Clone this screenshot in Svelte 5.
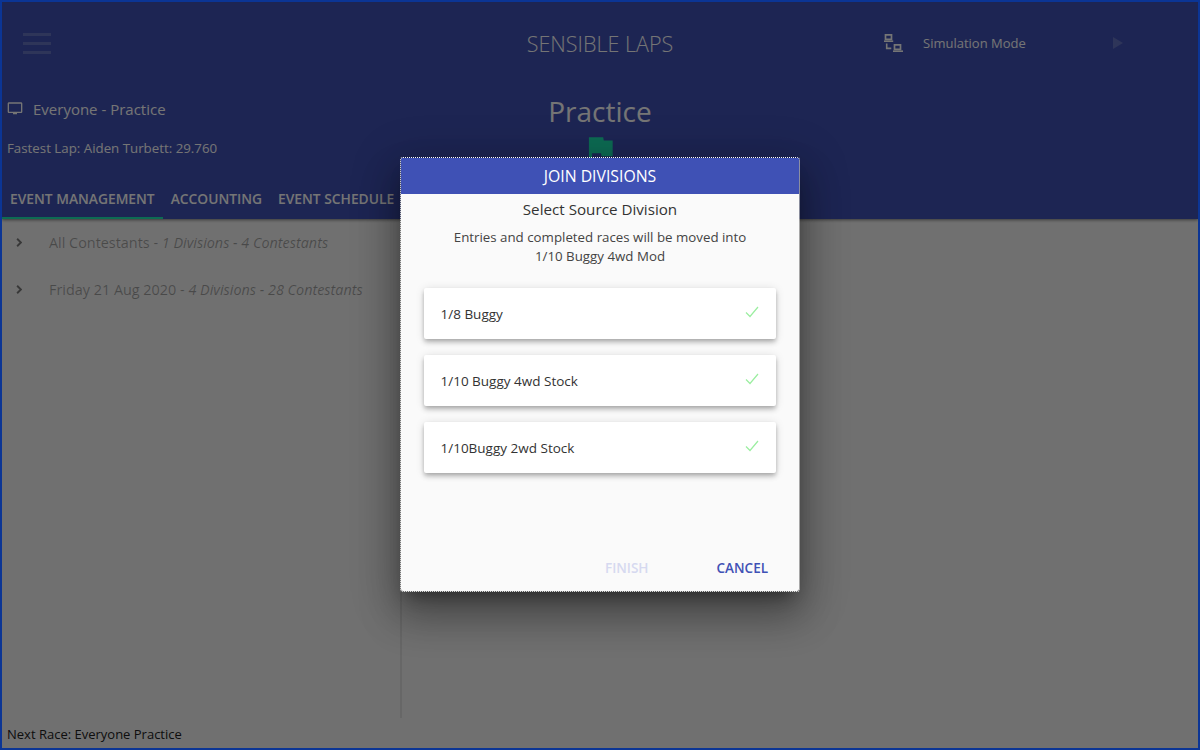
<script lang="ts">
const tabs = ['EVENT MANAGEMENT', 'ACCOUNTING', 'EVENT SCHEDULE'];
const groups = [
  { name: 'All Contestants', detail: '1 Divisions - 4 Contestants' },
  { name: 'Friday 21 Aug 2020', detail: '4 Divisions - 28 Contestants' },
];
const divisions = ['1/8 Buggy', '1/10 Buggy 4wd Stock', '1/10Buggy 2wd Stock'];
</script>

<div class="window">
  <header class="header">
    <div class="topbar">
      <div class="menu" aria-hidden="true"><i></i><i></i><i></i></div>
      <div class="brand">SENSIBLE LAPS</div>
      <div class="mode">
        <svg class="mode-icon" viewBox="0 0 20 20" width="20" height="20" aria-hidden="true">
          <path d="M2.5 1.8h6v4.6h-6z" fill="none" stroke="currentColor" stroke-width="1.7"/>
          <path d="M1 7.4h9.2v1.6H1z" fill="currentColor"/>
          <path d="M11.5 11.8h6v4.6h-6z" fill="none" stroke="currentColor" stroke-width="1.7"/>
          <path d="M10 17.4h10v1.6H10z" fill="currentColor"/>
          <path d="M3.7 10.4v5h4.6" fill="none" stroke="currentColor" stroke-width="1.6"/>
        </svg>
        <span class="mode-label">Simulation Mode</span>
        <svg class="play" viewBox="0 0 10 12" width="10" height="12" aria-hidden="true"><path d="M0 0l10 6-10 6z" fill="currentColor"/></svg>
      </div>
    </div>

    <div class="status">
      <div class="status-left">
        <div class="session">
          <svg viewBox="0 0 24 24" width="16" height="16" aria-hidden="true">
            <path fill="currentColor" d="M21 2H3c-1.1 0-2 .9-2 2v12c0 1.1.9 2 2 2h6v2h6v-2h6c1.1 0 2-.9 2-2V4c0-1.1-.9-2-2-2zm0 14H3V4h18v12z"/>
          </svg>
          <span>Everyone - Practice</span>
        </div>
        <div class="fastest">Fastest Lap: Aiden Turbett: 29.760</div>
      </div>
      <div class="status-mid">
        <div class="race-title">Practice</div>
        <svg class="flag" viewBox="0 0 24 24" width="38" height="38" aria-hidden="true">
          <path fill="#1de9b6" d="M14.4 6L14 4H5v17h2v-7h5.6l.4 2h7V6z"/>
        </svg>
      </div>
    </div>

    <nav class="tabs">
      {#each tabs as tab, i}
        <span class="tab" class:active={i === 0}>{tab}</span>
      {/each}
    </nav>
  </header>

  <main class="content">
    <section class="left">
      {#each groups as group}
        <div class="group">
          <svg viewBox="0 0 8 12" width="6" height="9" aria-hidden="true"><path d="M1.5 1l5 5-5 5" fill="none" stroke="currentColor" stroke-width="2.4"/></svg>
          <span class="group-text">{group.name} - <em>{group.detail}</em></span>
        </div>
      {/each}
    </section>
  </main>

  <footer class="footer">Next Race: Everyone Practice</footer>

  <div class="scrim"></div>

  <div class="dialog" role="dialog" aria-label="Join Divisions">
    <h2 class="dialog-title">JOIN DIVISIONS</h2>
    <div class="dialog-body">
      <h3 class="subtitle">Select Source Division</h3>
      <p class="note">Entries and completed races will be moved into<br />1/10 Buggy 4wd Mod</p>
      <div class="cards">
        {#each divisions as division}
          <div class="card">
            <span>{division}</span>
            <svg viewBox="0 0 14 12" width="14" height="12" aria-hidden="true"><path d="M1 6.5l4 4L13 1" fill="none" stroke="#9beea0" stroke-width="1.2"/></svg>
          </div>
        {/each}
      </div>
    </div>
    <div class="actions">
      <span class="action disabled">FINISH</span>
      <span class="action">CANCEL</span>
    </div>
  </div>
</div>

<style>
:global(body) { margin: 0; font-family: "Open Sans", "Noto Sans", sans-serif; }
.window { position: relative; width: 1200px; height: 750px; box-sizing: border-box; border: 2px solid #0b3595; display: flex; flex-direction: column; background: #f5f5f5; overflow: hidden; }
.header { background: #3f51b5; color: #fff; height: 217px; flex: none; display: flex; flex-direction: column; box-shadow: 0 1px 3px rgba(0,0,0,.5); position: relative; }
.topbar { height: 82px; flex: none; display: grid; grid-template-columns: 1fr auto 1fr; align-items: center; }
.menu { margin-left: 21px; width: 28px; display: flex; flex-direction: column; gap: 6px; }
.menu i { display: block; height: 3px; background: rgba(255,255,255,.2); }
.brand { font-size: 21.5px; font-weight: 300; }
.mode { display: flex; align-items: center; justify-self: end; margin-right: 75px; }
.mode-icon { margin-right: 20px; margin-left: -1px; }
.mode-label { font-size: 13px; width: 190px; }
.play { color: rgba(255,255,255,.2); }
.status { flex: 1; position: relative; display: flex; }
.status-left { padding: 14px 0 0 5px; }
.session { display: flex; align-items: center; gap: 10px; font-size: 15px; height: 22px; }
.fastest { font-size: 13.3px; margin-top: 19px; }
.status-mid { position: absolute; left: 0; right: 0; top: 8px; display: flex; flex-direction: column; align-items: center; }
.race-title { font-size: 28px; line-height: 38px; }
.flag { margin-top: 1px; }
.tabs { display: flex; height: 36px; flex: none; align-items: stretch; }
.tab { padding: 0 8px; font-size: 13.8px; font-weight: 600; line-height: 31px; box-sizing: border-box; }
.tab.active { border-bottom: 2px solid #1de9b6; }
.content { flex: 1; display: flex; min-height: 0; padding-bottom: 2px; }
.left { width: 400px; box-sizing: border-box; border-right: 2px solid #e0e0e0; }
.group { height: 47px; display: flex; align-items: center; padding-left: 14px; color: rgba(0,0,0,.5); }
.group-text { margin-left: 27px; font-size: 14.4px; color: rgba(0,0,0,.34); margin-top: -1px; }
.footer { height: 28px; flex: none; padding-left: 5px; font-size: 13px; line-height: 28px; color: #222; }
.scrim { position: absolute; inset: 0; background: rgba(0,0,0,.54); }
.dialog { position: absolute; left: 399px; top: 156px; width: 398px; height: 433px; box-sizing: border-box; background: #fafafa; border-radius: 2px; outline: 1px dotted #fff; box-shadow: 0 11px 15px -7px rgba(0,0,0,.4), 0 24px 38px 3px rgba(0,0,0,.26), 0 9px 46px 8px rgba(0,0,0,.2); display: flex; flex-direction: column; color: #333; }
.dialog-title { margin: 0; height: 36px; flex: none; background: #3f51b5; color: #fff; font-size: 15.8px; font-weight: 400; line-height: 36px; text-align: center; }
.dialog-body { flex: 1; display: flex; flex-direction: column; align-items: center; }
.subtitle { margin: 5px 0 0; font-size: 15.2px; font-weight: 400; line-height: 21px; }
.note { margin: 8px 0 0; font-size: 13.3px; line-height: 19px; text-align: center; color: #444; }
.cards { margin-top: 22px; width: 352px; display: flex; flex-direction: column; gap: 16px; }
.card { height: 51px; background: #fff; border-radius: 2px; box-shadow: 0 2px 4px -1px rgba(0,0,0,.2), 0 4px 5px rgba(0,0,0,.14), 0 1px 10px rgba(0,0,0,.12); display: flex; align-items: center; justify-content: space-between; padding: 0 17px 0 16.5px; font-size: 13.5px; color: #333; }
.card svg { margin-bottom: 3px; }
.actions { height: 46px; flex: none; display: flex; justify-content: flex-end; gap: 68px; padding-right: 31px; font-size: 13.5px; font-weight: 600; line-height: 46px; color: #3f51b5; }
.action.disabled { color: #d6d9f0; }
</style>
